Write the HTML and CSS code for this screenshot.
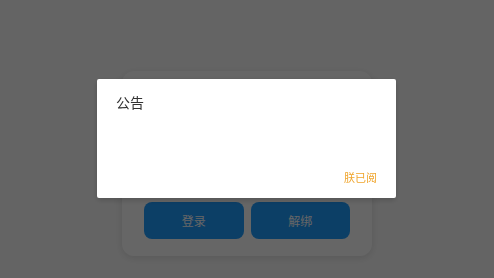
FILE: index.html
```html
<!DOCTYPE html>
<html lang="zh">
<head>
<meta charset="utf-8">
<link rel="stylesheet" href="styles.css">
</head>
<body>
<div class="page">
  <div class="card">
    <div class="card-body"></div>
    <div class="actions">
      <button class="btn">登录</button>
      <button class="btn">解绑</button>
    </div>
  </div>
</div>
<div class="mask"></div>
<div class="dialog">
  <div class="dialog-title">公告</div>
  <div class="dialog-content"></div>
  <div class="dialog-footer"><span class="confirm">朕已阅</span></div>
</div>
</body>
</html>
```
FILE: styles.css
```css
* { box-sizing: border-box; }
html, body { margin: 0; padding: 0; }
body {
  width: 494px;
  height: 278px;
  overflow: hidden;
  background: #fbfbfb;
  font-family: "Noto Sans CJK SC", "Noto Sans", sans-serif;
}
.page {
  display: flex;
  justify-content: center;
  padding-top: 71px;
}
.card {
  width: 250px;
  height: 185px;
  background: #ffffff;
  border-radius: 12px;
  box-shadow: 0 2px 8px rgba(0,0,0,0.12);
  display: flex;
  flex-direction: column;
  padding: 0 22px 17px;
}
.card-body { flex: 1; }
.actions {
  display: flex;
  gap: 7px;
}
.btn {
  flex: 1;
  height: 37px;
  border: none;
  border-radius: 8px;
  background: #1f9dff;
  color: #ffffff;
  font-family: "Noto Sans CJK SC", sans-serif;
  font-size: 12px;
  padding: 0;
}
.mask {
  position: fixed;
  inset: 0;
  background: rgba(0,0,0,0.6);
}
.dialog {
  position: fixed;
  left: 97px;
  top: 79px;
  width: 299px;
  height: 119px;
  background: #fff;
  border-radius: 2px;
  box-shadow: 0 2px 6px rgba(0,0,0,0.2);
  display: flex;
  flex-direction: column;
  padding: 13px 19px 12px;
}
.dialog-title {
  font-size: 14px;
  line-height: 20px;
  color: #333;
}
.dialog-content { flex: 1; }
.dialog-footer {
  display: flex;
  justify-content: flex-end;
}
.confirm {
  font-size: 11px;
  line-height: 18px;
  color: #f0a52c;
}
```
